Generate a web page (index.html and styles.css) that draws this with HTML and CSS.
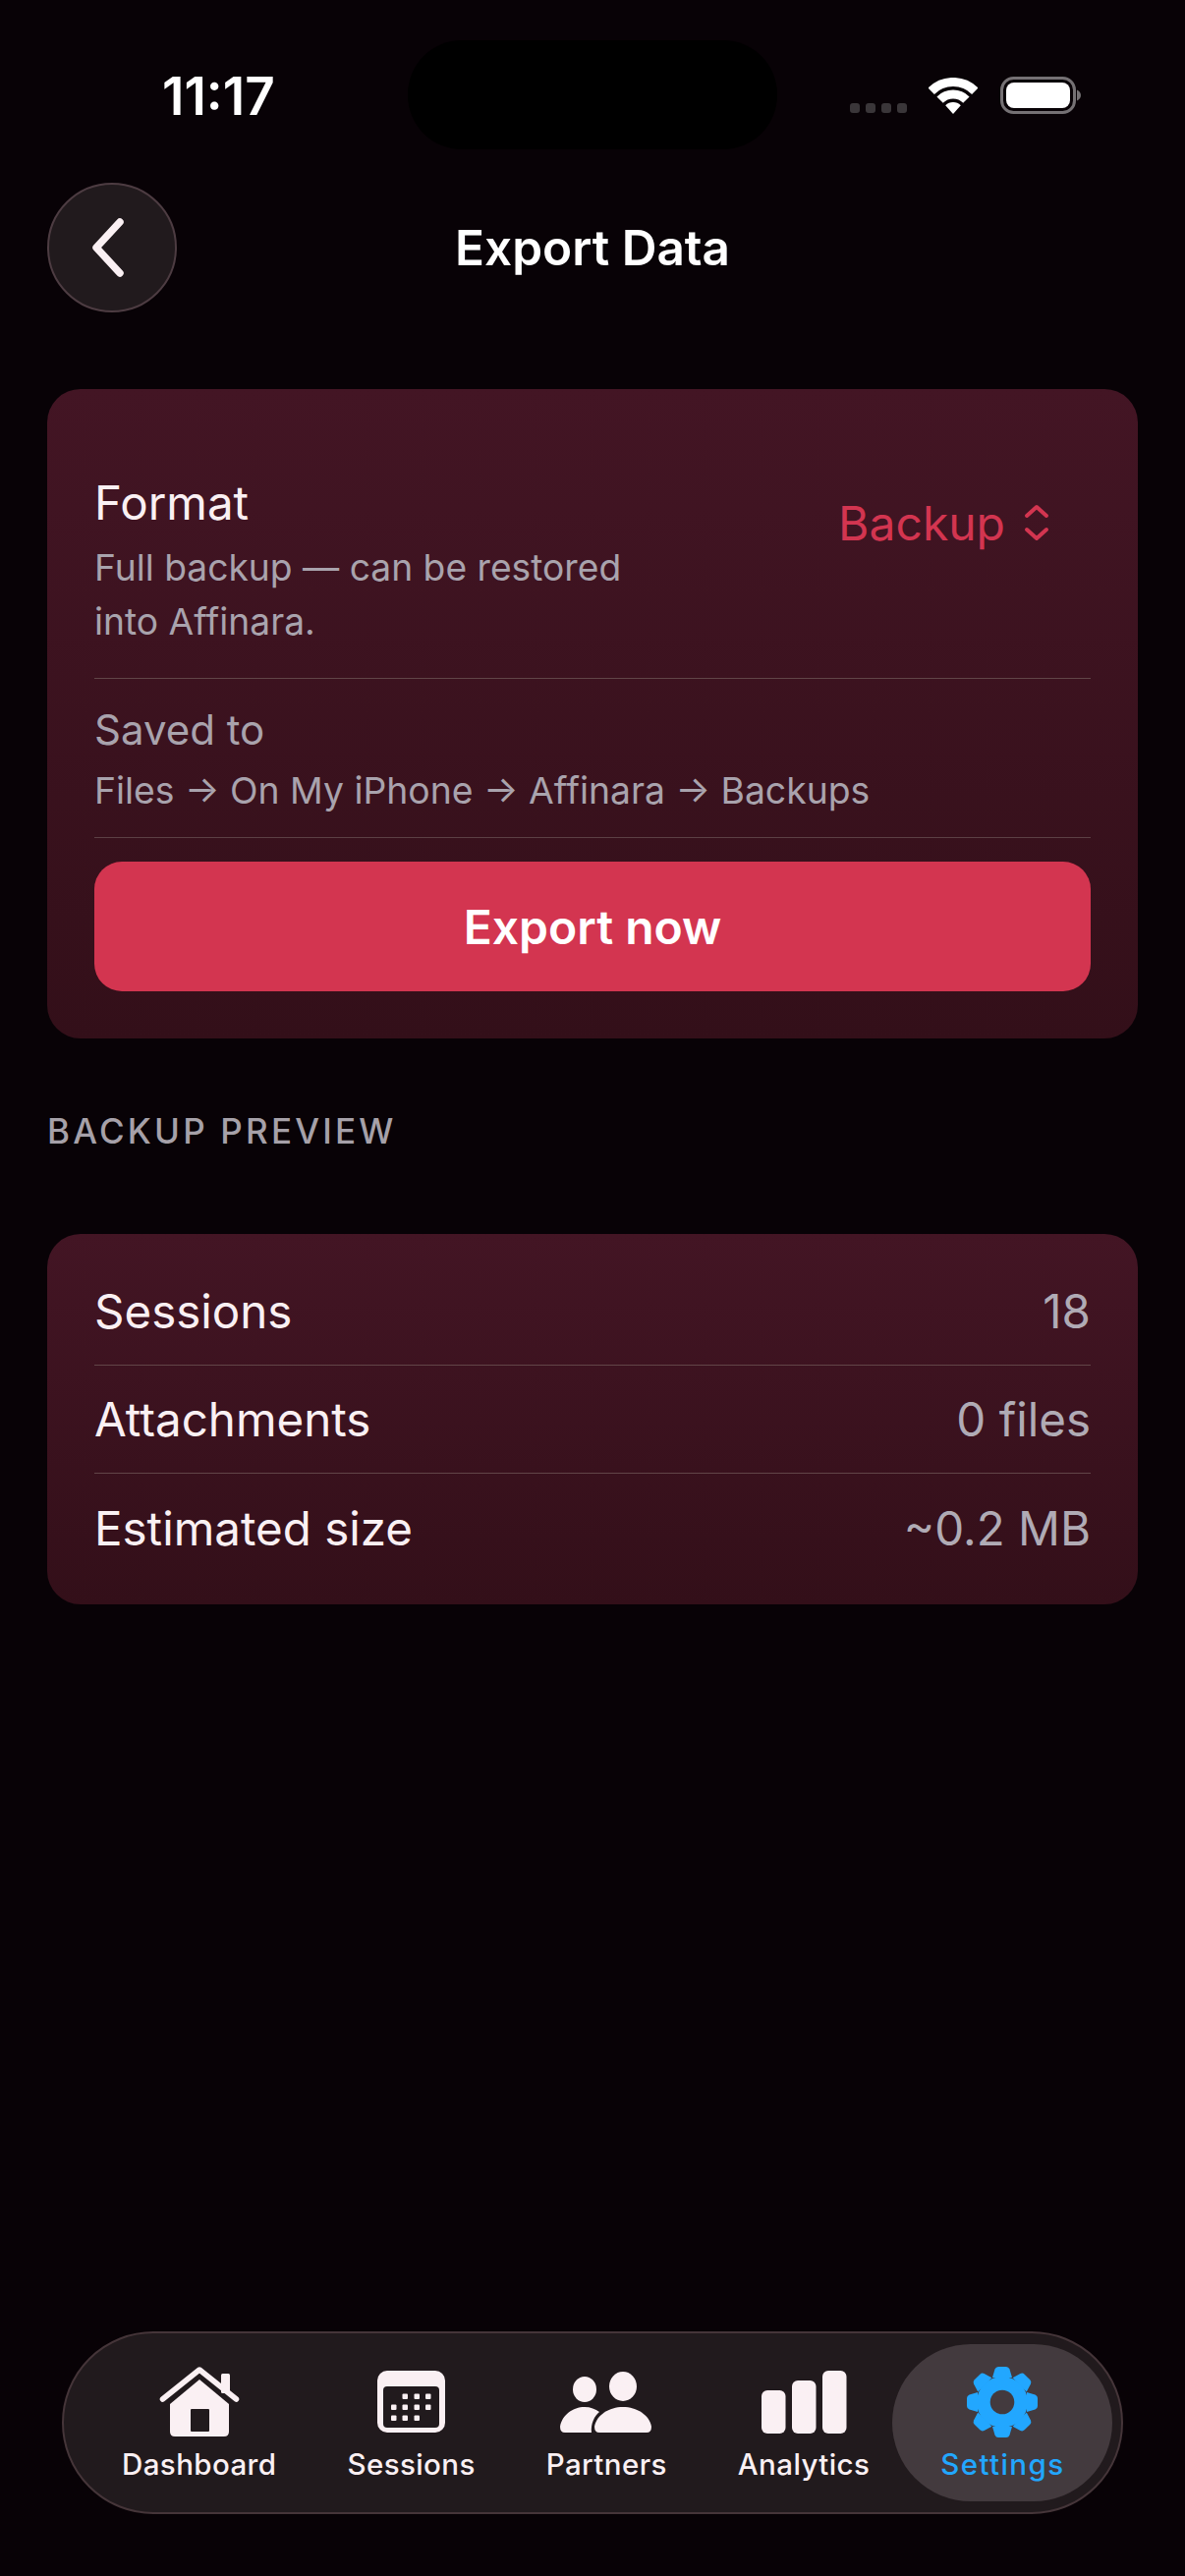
FILE: index.html
```html
<!DOCTYPE html>
<html lang="en">
<head>
    <meta charset="UTF-8">
    <meta name="viewport" content="width=device-width, initial-scale=1.0">
    <title>Export Data</title>
    <link rel="stylesheet" href="styles.css">
</head>
<body>
    <div class="status-bar">
        <span class="time">11:17</span>
        <div class="island"></div>
        <div class="status-icons">
            <div class="signal"><i></i><i></i><i></i><i></i></div>
            <svg class="wifi" width="50" height="37" viewBox="0 0 50 37">
                <path d="M2.7 13.7A31.5 31.5 0 0 1 47.3 13.7" fill="none" stroke="#fff" stroke-width="9"/>
                <path d="M11.6 22.6A19 19 0 0 1 38.4 22.6" fill="none" stroke="#fff" stroke-width="9"/>
                <path d="M25 37L17.2 28.2A11 11 0 0 1 32.8 28.2Z" fill="#fff"/>
            </svg>
            <svg class="battery" width="82" height="38" viewBox="0 0 82 38">
                <rect x="1.5" y="1.5" width="74" height="35" rx="12" fill="none" stroke="#757174" stroke-width="3"/>
                <rect x="6" y="6" width="65" height="26" rx="8" fill="#fff"/>
                <path d="M78 13.5C80.5 14.5 82 16.5 82 19C82 21.5 80.5 23.5 78 24.5Z" fill="#757174"/>
            </svg>
        </div>
    </div>

    <header class="nav">
        <button class="back-btn">
            <svg width="40" height="64" viewBox="0 0 40 64">
                <path d="M31 6L7 32L31 58" fill="none" stroke="#faf0f3" stroke-width="7.5" stroke-linecap="round" stroke-linejoin="round"/>
            </svg>
        </button>
        <h1>Export Data</h1>
    </header>

    <main class="content">
        <section class="card export-card">
            <div class="format-row">
                <div>
                    <div class="format-title">Format</div>
                    <p class="format-desc">Full backup — can be restored<br>into Affinara.</p>
                </div>
                <div class="picker">
                    <span>Backup</span>
                    <svg width="26" height="38" viewBox="0 0 26 38">
                        <path d="M3 12L13 3L23 12M3 26L13 35L23 26" fill="none" stroke="#d33550" stroke-width="4" stroke-linecap="round" stroke-linejoin="round"/>
                    </svg>
                </div>
            </div>
            <div class="saved-row">
                <div class="saved-title">Saved to</div>
                <div class="saved-path">Files → On My iPhone → Affinara → Backups</div>
            </div>
            <button class="export-btn">Export now</button>
        </section>

        <h2 class="section-label">BACKUP PREVIEW</h2>

        <section class="card preview-card">
            <div class="row"><span>Sessions</span><span class="value">18</span></div>
            <div class="row"><span>Attachments</span><span class="value">0 files</span></div>
            <div class="row"><span>Estimated size</span><span class="value">~0.2 MB</span></div>
        </section>
    </main>

    <nav class="tab-bar">
        <div class="tab">
            <div class="tab-icon">
                <svg width="82" height="72" viewBox="0 0 82 72">
                    <rect x="63" y="7" width="9" height="20" rx="1.5" fill="#faf0f3"/>
                    <path d="M11 38L41 13L71 38V66Q71 71 66 71H16Q11 71 11 66Z" fill="#faf0f3"/>
                    <rect x="32" y="43" width="19" height="23" rx="1" fill="#211a1d"/>
                    <path d="M3.5 33L41 3L78.5 33" fill="none" stroke="#faf0f3" stroke-width="5.5" stroke-linecap="round" stroke-linejoin="round"/>
                </svg>
            </div>
            <span>Dashboard</span>
        </div>
        <div class="tab">
            <div class="tab-icon">
                <svg width="69" height="63" viewBox="0 0 69 63">
                    <rect width="69" height="63" rx="10" fill="#faf0f3"/>
                    <rect x="6" y="16" width="57" height="42" rx="4" fill="#211a1d"/>
                    <g fill="#faf0f3">
                        <rect x="25.5" y="23.5" width="5.5" height="5.5" rx="1"/>
                        <rect x="37.5" y="23.5" width="5.5" height="5.5" rx="1"/>
                        <rect x="49" y="23.5" width="5.5" height="5.5" rx="1"/>
                        <rect x="14" y="34.5" width="5.5" height="5.5" rx="1"/>
                        <rect x="25.5" y="34.5" width="5.5" height="5.5" rx="1"/>
                        <rect x="37.5" y="34.5" width="5.5" height="5.5" rx="1"/>
                        <rect x="49" y="34.5" width="5.5" height="5.5" rx="1"/>
                        <rect x="14" y="45.5" width="5.5" height="5.5" rx="1"/>
                        <rect x="25.5" y="45.5" width="5.5" height="5.5" rx="1"/>
                        <rect x="37.5" y="45.5" width="5.5" height="5.5" rx="1"/>
                    </g>
                </svg>
            </div>
            <span>Sessions</span>
        </div>
        <div class="tab">
            <div class="tab-icon">
                <svg width="94" height="64" viewBox="0 0 94 64">
                    <g fill="#faf0f3">
                        <ellipse cx="64" cy="16" rx="14" ry="15"/>
                        <path d="M40 63Q35 63 35 57C37 45 50 37 64 37C78 37 91 45 93 57Q93 63 88 63Z"/>
                        <ellipse cx="25" cy="19" rx="12" ry="13"/>
                        <path d="M5 63Q0 63 0 57C2 45 13 37 25 37C31 37 36 39 40 42C35 46 31 54 32 63Z"/>
                    </g>
                </svg>
            </div>
            <span>Partners</span>
        </div>
        <div class="tab">
            <div class="tab-icon">
                <svg width="87" height="64" viewBox="0 0 87 64">
                    <g fill="#faf0f3">
                        <rect x="0" y="20" width="24.5" height="44" rx="6"/>
                        <rect x="31" y="10" width="24.5" height="54" rx="6"/>
                        <rect x="62" y="0" width="24.5" height="64" rx="6"/>
                    </g>
                </svg>
            </div>
            <span>Analytics</span>
        </div>
        <div class="tab active">
            <div class="tab-icon">
                <svg width="72" height="72" viewBox="-36 -36 72 72">
                    <g fill="#22a7ff">
                        <circle r="26"/>
                        <path d="M-10 -25L-7.5 -33.5Q-6.5 -36 -4 -36H4Q6.5 -36 7.5 -33.5L10 -25Z"/>
                        <path d="M-10 -25L-7.5 -33.5Q-6.5 -36 -4 -36H4Q6.5 -36 7.5 -33.5L10 -25Z" transform="rotate(45)"/>
                        <path d="M-10 -25L-7.5 -33.5Q-6.5 -36 -4 -36H4Q6.5 -36 7.5 -33.5L10 -25Z" transform="rotate(90)"/>
                        <path d="M-10 -25L-7.5 -33.5Q-6.5 -36 -4 -36H4Q6.5 -36 7.5 -33.5L10 -25Z" transform="rotate(135)"/>
                        <path d="M-10 -25L-7.5 -33.5Q-6.5 -36 -4 -36H4Q6.5 -36 7.5 -33.5L10 -25Z" transform="rotate(180)"/>
                        <path d="M-10 -25L-7.5 -33.5Q-6.5 -36 -4 -36H4Q6.5 -36 7.5 -33.5L10 -25Z" transform="rotate(225)"/>
                        <path d="M-10 -25L-7.5 -33.5Q-6.5 -36 -4 -36H4Q6.5 -36 7.5 -33.5L10 -25Z" transform="rotate(270)"/>
                        <path d="M-10 -25L-7.5 -33.5Q-6.5 -36 -4 -36H4Q6.5 -36 7.5 -33.5L10 -25Z" transform="rotate(315)"/>
                    </g>
                    <circle r="12.3" fill="#433a3e"/>
                </svg>
            </div>
            <span>Settings</span>
        </div>
    </nav>
</body>
</html>
```

FILE: styles.css
```css
* {
    box-sizing: border-box;
}
html, body {
    height: 100%;
}
body {
    margin: 0;
    background-color: #080206;
    color: #faf0f3;
    font-family: "Inter", "Liberation Sans", sans-serif;
    display: flex;
    flex-direction: column;
}

/* status bar */
.status-bar {
    height: 186px;
    padding: 41px 106px 0 165px;
    display: flex;
    align-items: flex-start;
}
.time {
    width: 250px;
    margin-top: 27px;
    font-size: 53px;
    line-height: 60px;
    font-weight: 600;
    color: #fff;
}
.island {
    width: 376px;
    height: 111px;
    border-radius: 55px;
    background-color: #000;
}
.status-icons {
    margin-left: 74px;
    margin-top: 37px;
    display: flex;
    align-items: flex-end;
}
.signal {
    display: flex;
    gap: 6px;
    margin-right: 22px;
    margin-bottom: 1px;
}
.signal i {
    width: 10px;
    height: 10px;
    border-radius: 3px;
    background-color: #3a3639;
}
.battery {
    margin-left: 23px;
}

/* header */
.nav {
    display: grid;
    grid-template-columns: 132px 1fr 132px;
    align-items: center;
    padding: 0 48px;
}
.back-btn {
    width: 132px;
    height: 132px;
    padding: 0;
    border-radius: 50%;
    border: 2px solid #4d3c42;
    background-color: #211a1d;
    display: flex;
    align-items: center;
    justify-content: center;
}
.back-btn svg {
    margin-right: 6px;
}
.nav h1 {
    margin: 0;
    font-size: 49.5px;
    font-weight: 600;
    text-align: center;
    color: #fff;
}

/* cards */
.content {
    flex: 1;
    padding: 78px 48px 0;
}
.card {
    border-radius: 34px;
    background: linear-gradient(to bottom, #431524, #330f19);
    padding: 0 48px;
}
.export-card {
    height: 661px;
}
.format-row {
    height: 295px;
    padding-top: 87px;
    display: flex;
    justify-content: space-between;
    border-bottom: 1px solid #614548;
}
.format-title {
    font-size: 47.5px;
    line-height: 58px;
}
.format-desc {
    margin: 9px 0 0;
    font-size: 37.2px;
    line-height: 55px;
    color: #a9a3ad;
}
.picker {
    display: flex;
    align-items: center;
    gap: 19px;
    height: 58px;
    margin-top: 20px;
    margin-right: 42px;
    font-size: 48px;
    color: #d33550;
}
.saved-row {
    height: 162px;
    padding-top: 27px;
    border-bottom: 1px solid #5c4045;
}
.saved-title {
    font-size: 42px;
    line-height: 50px;
    color: #a9a3ad;
}
.saved-path {
    margin-top: 14px;
    font-size: 37.3px;
    line-height: 46px;
    color: #a9a3ad;
}
.export-btn {
    display: block;
    width: 100%;
    height: 132px;
    margin-top: 24px;
    border: none;
    border-radius: 28px;
    background-color: #d33550;
    color: #fff;
    font-family: inherit;
    font-size: 48px;
    font-weight: 600;
}
.section-label {
    margin: 74px 0 0;
    height: 125px;
    font-size: 35px;
    line-height: 40px;
    font-weight: 500;
    letter-spacing: 3.2px;
    color: #a6a1a9;
}
.preview-card {
    height: 377px;
    padding-top: 24px;
}
.row {
    height: 110px;
    display: flex;
    align-items: center;
    justify-content: space-between;
    font-size: 47.5px;
    border-bottom: 1px solid #614548;
}
.row:last-child {
    border-bottom: none;
}
.value {
    color: #b0abb5;
}

/* tab bar */
.tab-bar {
    height: 186px;
    margin: 0 63px 63px;
    padding: 2px 0 0 59px;
    border: 2px solid #453539;
    border-radius: 93px;
    background-color: #211a1d;
    display: flex;
    align-items: center;
    gap: 72px;
}
.tab {
    position: relative;
    display: flex;
    flex-direction: column;
    align-items: center;
    font-size: 29.5px;
    line-height: 36px;
    font-weight: 500;
    letter-spacing: 0.4px;
    color: #faf0f3;
}
.tab-icon {
    position: relative;
    height: 72px;
    margin-bottom: 9px;
    display: flex;
    align-items: center;
}
.tab span {
    position: relative;
}
.tab.active {
    color: #22a7ff;
    letter-spacing: 1.4px;
}
/* highlight pill behind the selected tab */
.tab.active::before {
    content: "";
    position: absolute;
    left: -49px;
    right: -49px;
    top: -23px;
    bottom: -20px;
    border-radius: 80px;
    background-color: #433a3e;
}
```
